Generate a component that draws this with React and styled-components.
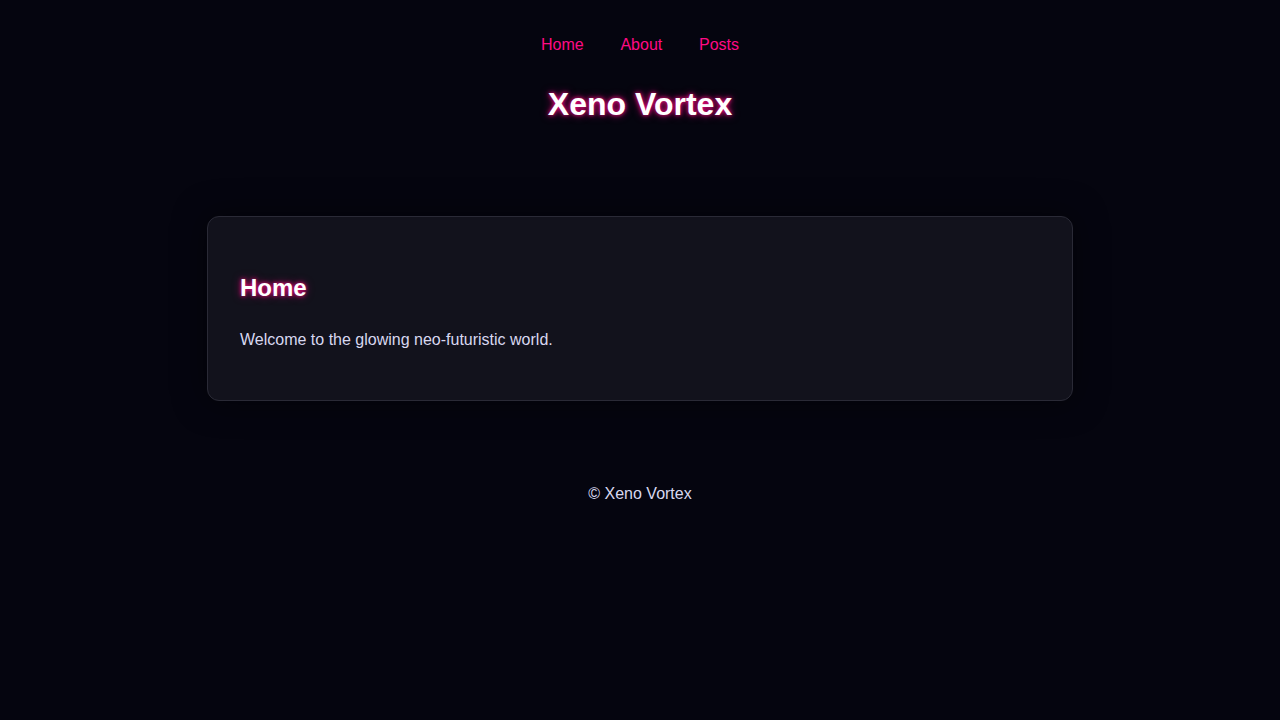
import styled, { createGlobalStyle } from "styled-components";

const GlobalStyle = createGlobalStyle`
  html, body {
    margin: 0;
    background: #05050f;
  }
  body {
    font-family: "Liberation Sans", Arial, sans-serif;
    line-height: 1.6;
    color: #d8d8f0;
  }
`;

const Header = styled.header`
  padding: 2rem;
  text-align: center;
`;

const Nav = styled.nav`
  display: flex;
  justify-content: center;
  gap: 36.75px;

  a {
    color: #ff0a85;
    text-decoration: none;
    font-size: 16px;
  }
`;

const Title = styled.h1`
  font-size: 32px;
  margin: 0.67em 0;
  color: #fff;
  text-shadow: 0 0 4px #ff0a85, 0 0 8px rgba(255, 10, 133, 0.6);
`;

const Main = styled.main`
  padding: 2rem;
  display: flex;
  justify-content: center;
`;

const Card = styled.section`
  width: 800px;
  padding: 0 32px;
  background: #12121c;
  border: 1px solid #2a2a36;
  border-radius: 12px;
  box-shadow: 0 0 32px rgba(0, 0, 0, 0.5);

  h2 {
    font-size: 24px;
    margin: 51.92px 0 19.92px;
    color: #fff;
    text-shadow: 0 0 4px #ff0a85, 0 0 8px rgba(255, 10, 133, 0.5);
  }

  p {
    margin: 0 0 48px;
    font-size: 16px;
  }
`;

const Footer = styled.footer`
  padding: 48px 2rem;
  text-align: center;
  font-size: 16px;
`;

export default function App() {
  return (
    <>
      <GlobalStyle />
      <Header>
        <Nav>
          <a href="#">Home</a>
          <a href="#">About</a>
          <a href="#">Posts</a>
        </Nav>
        <Title>Xeno Vortex</Title>
      </Header>
      <Main>
        <Card>
          <h2>Home</h2>
          <p>Welcome to the glowing neo-futuristic world.</p>
        </Card>
      </Main>
      <Footer>© Xeno Vortex</Footer>
    </>
  );
}
